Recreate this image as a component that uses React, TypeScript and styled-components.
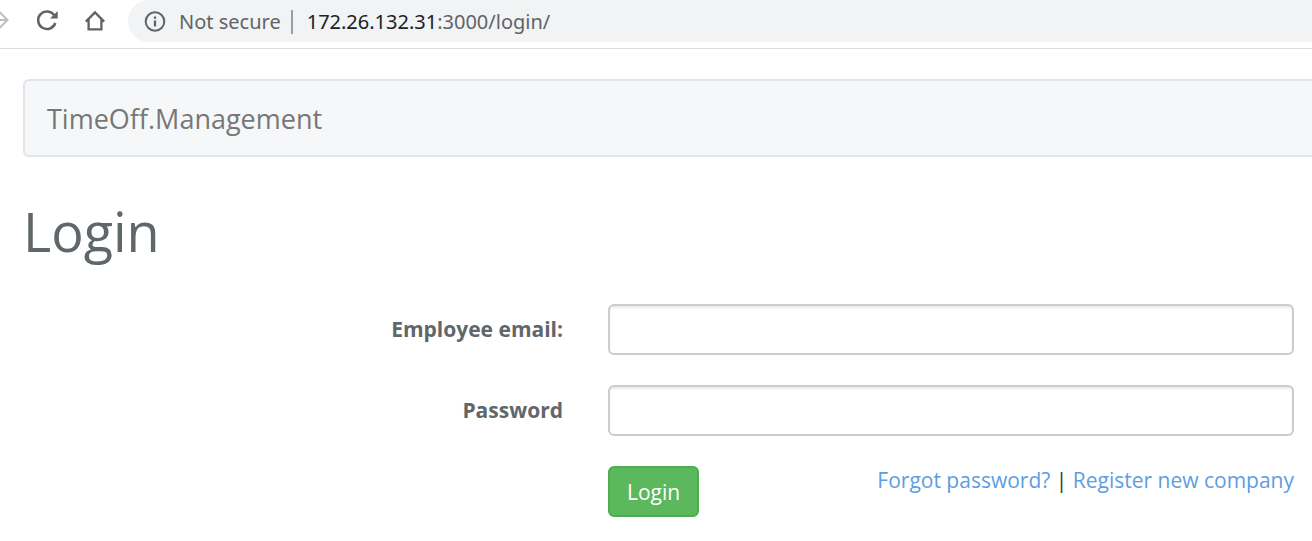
import React from 'react';
import styled, { createGlobalStyle } from 'styled-components';

const GlobalStyle = createGlobalStyle`
  *, *::before, *::after { box-sizing: border-box; }
  body {
    margin: 0;
    background: #fff;
    color: #5f676b;
    font: 21px/30px "Open Sans", sans-serif;
  }
`;

const BrowserBar = styled.header`
  display: flex;
  align-items: flex-start;
  height: 49px;
  border-bottom: 1px solid #dadce0;
  overflow: hidden;
`;

const NavButtons = styled.div`
  display: flex;
  flex: none;
  align-items: center;
  width: 128px;
  height: 42px;
`;

const NavButton = styled.button<{ $edge?: boolean }>`
  flex: none;
  width: ${p => (p.$edge ? 23 : 48)}px;
  height: 42px;
  padding: 0;
  border: 0;
  background: none;
  color: ${p => (p.$edge ? '#bdbfc1' : '#5f6368')};

  svg { display: block; }
`;

const AddressBar = styled.div`
  display: flex;
  flex: 1;
  align-items: center;
  height: 42px;
  padding: 2px 0 0 16px;
  border-radius: 21px 0 0 21px;
  background: #f1f3f4;
  color: #5f6368;
  font: 20px/30px "Noto Sans", sans-serif;
  white-space: nowrap;
`;

const Security = styled.span`
  margin-left: 13px;
`;

const Divider = styled.span`
  width: 2px;
  height: 24px;
  margin: 0 14px 0 10px;
  background: #9b9ea1;
`;

const Host = styled.span`
  color: #202124;
`;

const Page = styled.main`
  padding: 30px 0 24px 23px;
`;

const Navbar = styled.nav`
  display: flex;
  align-items: center;
  height: 78px;
  padding: 2px 22px 0;
  border: 2px solid #e1e6ea;
  border-right: 0;
  border-radius: 6px 0 0 6px;
  background: #f5f7f9;
`;

const Brand = styled.a`
  color: #777;
  font-size: 27px;
  line-height: 30px;
  text-decoration: none;
`;

const Title = styled.h1`
  margin: 44px 0 43px;
  font-size: 54px;
  font-weight: 400;
  line-height: 60px;
`;

const Form = styled.form`
  display: grid;
  grid-template-columns: 540fr 686fr;
  gap: 30px 45px;
  margin-right: 18px;
`;

const Label = styled.label`
  padding-top: 10px;
  font-weight: 700;
  text-align: right;
`;

const Field = styled.input`
  width: 100%;
  height: 51px;
  padding: 9px 18px;
  border: 2px solid #ccc;
  border-radius: 6px;
  background: #fff;
  box-shadow: inset 0 2px 2px rgba(0, 0, 0, 0.075);
  color: #555;
  font: inherit;
`;

const Actions = styled.div`
  display: flex;
  grid-column: 2;
  align-items: flex-start;
  justify-content: space-between;
`;

const SubmitButton = styled.button`
  height: 51px;
  padding: 0 17px;
  border: 2px solid #4cae4c;
  border-radius: 6px;
  background: #5cb85c;
  color: #fff;
  font: inherit;
`;

const Links = styled.div`
  color: #333;
  line-height: 28px;
`;

const TextLink = styled.a`
  color: #5d9ee2;
  text-decoration: none;
`;

export default function App() {
  return (
    <>
      <GlobalStyle />
      <BrowserBar>
        <NavButtons>
          <NavButton $edge type="button" aria-label="Forward">
            <svg width="23" height="42" fill="none" stroke="currentColor" strokeWidth="2">
              <path d="M-8 20H7M-1 11.5L7.500 20L-1 28.500" />
            </svg>
          </NavButton>
          <NavButton type="button" aria-label="Reload">
            <svg width="48" height="42" fill="none" stroke="currentColor" strokeWidth="2.500">
              <path d="M31.300 15.400A8.800 8.800 0 1 0 32.300 23" />
              <path d="M34.700 11V18.600H27Z" fill="currentColor" stroke="none" />
            </svg>
          </NavButton>
          <NavButton type="button" aria-label="Home">
            <svg width="48" height="42" fill="none" stroke="currentColor" strokeWidth="2.300">
              <path d="M14.800 21.600L24 12.400L33.200 21.600M17.600 19.500V29.300H30.400V19.500" />
            </svg>
          </NavButton>
        </NavButtons>
        <AddressBar>
          <svg width="22" height="22" fill="none" stroke="currentColor" strokeWidth="2" aria-hidden="true">
            <circle cx="11" cy="10.500" r="9.300" />
            <path d="M11 9.500V15.500M11 5.500V7.700" strokeWidth="2.300" />
          </svg>
          <Security>Not secure</Security>
          <Divider />
          <Host>172.26.132.31</Host>
          <span>:3000/login/</span>
        </AddressBar>
      </BrowserBar>
      <Page>
        <Navbar>
          <Brand href="#">TimeOff.Management</Brand>
        </Navbar>
        <Title>Login</Title>
        <Form onSubmit={e => e.preventDefault()}>
          <Label htmlFor="email">Employee email:</Label>
          <Field id="email" type="email" />
          <Label htmlFor="password">Password</Label>
          <Field id="password" type="password" />
          <Actions>
            <SubmitButton type="submit">Login</SubmitButton>
            <Links>
              <TextLink href="#forgot">Forgot password?</TextLink> | <TextLink href="#register">Register new company</TextLink>
            </Links>
          </Actions>
        </Form>
      </Page>
    </>
  );
}
